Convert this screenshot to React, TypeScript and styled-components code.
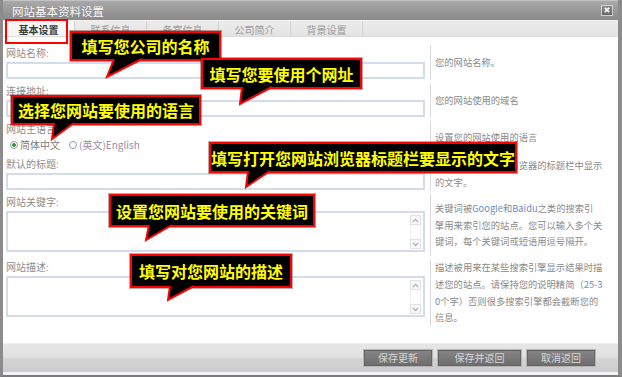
import React from "react";
import styled, { createGlobalStyle } from "styled-components";

const CJK = `"Noto Sans CJK SC", "Noto Sans", sans-serif`;

const GlobalStyle = createGlobalStyle`
  html, body { margin: 0; padding: 0; background: #fff; }
  body { font-family: ${CJK}; }
  * { box-sizing: border-box; }
`;

const Stage = styled.div`
  position: relative;
  width: 622px;
  height: 377px;
  overflow: hidden;
`;

const Frame = styled.div`
  width: 622px;
  height: 377px;
  border-left: 3px solid #8b8b8b;
  border-right: 4px solid #8b8b8b;
  border-bottom: 2px solid #7b7b7b;
  display: flex;
  flex-direction: column;
  background: #fff;
  font-family: ${CJK};
`;

const TitleBar = styled.div`
  height: 20px;
  flex: none;
  display: flex;
  align-items: center;
  justify-content: space-between;
  padding: 0 5px 0 9px;
  border-top: 1px solid #c2c2c2;
  background: linear-gradient(#a9a9a9 0%, #9c9c9c 40%, #8a8a8a 100%);
`;

const Title = styled.span`
  color: #fff;
  font-size: 11.5px;
  line-height: 14px;
  text-shadow: 0 0 1px rgba(0, 0, 0, 0.25);
`;

const CloseBtn = styled.div`
  width: 12px;
  height: 11px;
  margin-top: -1px;
  border: 1px solid #cfcfcf;
  background: linear-gradient(#8c8c8c, #676767);
  display: flex;
  align-items: center;
  justify-content: center;
`;

const TabStrip = styled.div`
  height: 17px;
  flex: none;
  display: flex;
  background: linear-gradient(#ececec, #e3e3e3);
  border-top: 1px solid #f2f2f2;
  border-bottom: 1px solid #dcdcdc;
`;

const Tab = styled.div<{ $active?: boolean }>`
  width: 72px;
  display: flex;
  justify-content: center;
  padding-top: 3px;
  font-size: 10px;
  line-height: 12px;
  color: ${(p) => (p.$active ? "#3a3a3a" : "#9a9a9a")};
  font-weight: ${(p) => (p.$active ? 700 : 400)};
  background: ${(p) => (p.$active ? "#f6f6f6" : "transparent")};
  border-right: 1px solid #d2d2d2;
`;

const Body = styled.div`
  flex: 1;
  padding: 7px 0 0 3px;
  overflow: hidden;
`;

const Row = styled.div`
  display: grid;
  grid-template-columns: 419px 1fr;
  column-gap: 5px;
`;

const Field = styled.div<{ $bottom?: number }>`
  padding: 2px 0 ${(p) => p.$bottom ?? 3}px;
`;

const Label = styled.div`
  height: 14px;
  line-height: 14px;
  margin-bottom: 2px;
  font-size: 10px;
  color: #8e8e8e;
  white-space: nowrap;
`;

const Colon = styled.span`
  color: #c493c4;
`;

const TextInput = styled.input`
  display: block;
  width: 100%;
  height: 17px;
  margin: 0;
  padding: 0 3px;
  border: 2px solid #d3dce8;
  font-size: 10px;
  font-family: ${CJK};
  background: #fff;
  outline: none;
`;

const TextBox = styled.div`
  display: flex;
  height: 41px;
  border: 2px solid #d3dce8;
  background: #fff;
`;

const Area = styled.textarea`
  flex: 1;
  border: none;
  resize: none;
  outline: none;
  overflow: hidden;
  padding: 2px 3px;
  font-size: 10px;
  font-family: ${CJK};
  background: transparent;
`;

const ScrollTrack = styled.div`
  width: 11px;
  margin: 2px 2px 1px 0;
  display: flex;
  flex-direction: column;
  justify-content: space-between;
  border-left: 1px solid #eef0f3;
  border-right: 1px solid #eef0f3;
`;

const ArrowBtn = styled.div`
  width: 11px;
  height: 10px;
  margin-left: -1px;
  border: 1px solid #dfe3e8;
  background: #f7f7f7;
  display: flex;
  align-items: center;
  justify-content: center;
`;

const RadioRow = styled.div`
  height: 14px;
  display: flex;
  align-items: center;
  padding-left: 4px;
  font-size: 10px;
  line-height: 14px;
`;

const RadioDot = styled.span<{ $checked?: boolean }>`
  width: 8px;
  height: 8px;
  border-radius: 50%;
  border: 1px solid #8f9ca8;
  margin-right: 2px;
  background: ${(p) =>
    p.$checked ? "radial-gradient(circle, #3c9c3c 0 1.6px, #fff 2.2px)" : "#fff"};
`;

const RadioText = styled.span<{ $tone?: "plain" | "alt" }>`
  color: ${(p) => (p.$tone === "alt" ? "#a08aa6" : "#7c7c7c")};
  margin-right: 9px;
  white-space: nowrap;
`;

const HelpCell = styled.div`
  margin: 1px 0 2px;
  border-left: 1px solid #dadada;
  padding-left: 4px;
  display: flex;
  align-items: center;
  font-size: 9.3px;
  line-height: 16.8px;
  color: #8a8a8a;
  white-space: nowrap;
`;

const Hi = styled.span`
  color: #6c8cc6;
`;

const Footer = styled.div`
  height: 29px;
  flex: none;
  display: flex;
  justify-content: flex-end;
  align-items: center;
  gap: 4px;
  padding-right: 22px;
  border-top: 1px solid #efefef;
  background: linear-gradient(#e6e6e6 0%, #e1e1e1 45%, #d3d3d3 55%, #cccccc 100%);
`;

const BottomStrip = styled.div`
  height: 3px;
  flex: none;
  background: #f2f2f6;
`;

const Button = styled.button<{ $w: number }>`
  width: ${(p) => p.$w}px;
  height: 18px;
  padding: 0;
  margin: 0;
  border: 1px solid #b4b4b4;
  box-shadow: inset 0 0 0 1px #666;
  background: linear-gradient(#868686, #6c6c6c);
  color: #d6d6d6;
  font-size: 10px;
  font-family: ${CJK};
  line-height: 14px;
`;

const TabMark = styled.div`
  position: absolute;
  left: 5px;
  top: 19px;
  width: 63px;
  height: 25px;
  border: 2px solid #ff0000;
  z-index: 2;
  pointer-events: none;
`;

const CalloutWrap = styled.div<{ $x: number; $y: number; $w: number; $h: number }>`
  position: absolute;
  left: ${(p) => p.$x}px;
  top: ${(p) => p.$y}px;
  width: ${(p) => p.$w}px;
  height: ${(p) => p.$h}px;
  z-index: 3;
`;

const Bubble = styled.div`
  width: 100%;
  height: 100%;
  background: #000;
  border: 2px solid #ff0000;
  box-shadow: 0 0 0 1px rgba(90, 0, 0, 0.35);
  color: #ffff00;
  font-family: ${CJK};
  font-weight: 700;
  font-size: 16px;
  line-height: 18px;
  display: flex;
  align-items: center;
  justify-content: center;
  white-space: nowrap;
`;

const TailSvg = styled.svg<{ $top: number }>`
  position: absolute;
  left: 0;
  top: ${(p) => p.$top}px;
  overflow: visible;
`;

type TailSpec = { l: number; r: number; tx: number; ty: number };
type CalloutSpec = { text: string; x: number; y: number; w: number; h: number; tail: TailSpec };

const callouts: CalloutSpec[] = [
  { text: "填写您公司的名称", x: 70, y: 31, w: 151, h: 30, tail: { l: 44, r: 72, tx: 37, ty: 16 } },
  { text: "填写您要使用个网址", x: 201, y: 58, w: 161, h: 31, tail: { l: 41, r: 71, tx: 39, ty: 15 } },
  { text: "选择您网站要使用的语言", x: 11, y: 95, w: 190, h: 30, tail: { l: 43, r: 63, tx: 41, ty: 14 } },
  { text: "填写打开您网站浏览器标题栏要显示的文字", x: 209, y: 142, w: 308, h: 31, tail: { l: 39, r: 61, tx: 37, ty: 14 } },
  { text: "设置您网站要使用的关键词", x: 109, y: 194, w: 206, h: 33, tail: { l: 40, r: 63, tx: 37, ty: 13 } },
  { text: "填写对您网站的描述", x: 130, y: 254, w: 162, h: 34, tail: { l: 40, r: 64, tx: 38, ty: 12 } },
];

function Callout({ c }: { c: CalloutSpec }) {
  const { l, r, tx, ty } = c.tail;
  const tipY = ty + 3;
  return (
    <CalloutWrap $x={c.x} $y={c.y} $w={c.w} $h={c.h}>
      <Bubble>{c.text}</Bubble>
      <TailSvg $top={c.h - 3} width={c.w} height={tipY + 2}>
        <polygon points={`${l},0 ${r},0 ${tx},${tipY}`} fill="#000" />
        <polyline
          points={`${l},1 ${tx},${tipY} ${r},1`}
          fill="none"
          stroke="#ff0000"
          strokeWidth={2}
          strokeLinejoin="miter"
        />
      </TailSvg>
    </CalloutWrap>
  );
}

function Chevron({ up }: { up?: boolean }) {
  return (
    <svg width="7" height="5" viewBox="0 0 7 5">
      <polyline
        points={up ? "1,4 3.5,1.3 6,4" : "1,1 3.5,3.7 6,1"}
        fill="none"
        stroke="#a9b0b8"
        strokeWidth="1.2"
      />
    </svg>
  );
}

function MemoBox() {
  return (
    <TextBox>
      <Area />
      <ScrollTrack>
        <ArrowBtn>
          <Chevron up />
        </ArrowBtn>
        <ArrowBtn>
          <Chevron />
        </ArrowBtn>
      </ScrollTrack>
    </TextBox>
  );
}

function FieldLabel({ text }: { text: string }) {
  return (
    <Label>
      {text}
      <Colon>:</Colon>
    </Label>
  );
}

const tabs = ["基本设置", "联系信息", "备案信息", "公司简介", "背景设置"];

export default function App() {
  return (
    <>
      <GlobalStyle />
      <Stage>
        <Frame>
          <TitleBar>
            <Title>网站基本资料设置</Title>
            <CloseBtn>
              <svg width="6" height="6" viewBox="0 0 6 6">
                <path d="M0.8 0.8 L5.2 5.2 M5.2 0.8 L0.8 5.2" stroke="#fff" strokeWidth="1.7" />
              </svg>
            </CloseBtn>
          </TitleBar>
          <TabStrip>
            {tabs.map((t, i) => (
              <Tab key={t} $active={i === 0}>
                {t}
              </Tab>
            ))}
          </TabStrip>
          <Body>
            <Row>
              <Field>
                <FieldLabel text="网站名称" />
                <TextInput />
              </Field>
              <HelpCell>您的网站名称。</HelpCell>
            </Row>
            <Row>
              <Field>
                <FieldLabel text="连接地址" />
                <TextInput />
              </Field>
              <HelpCell>您的网站使用的域名</HelpCell>
            </Row>
            <Row>
              <Field>
                <FieldLabel text="网站主语言" />
                <RadioRow>
                  <RadioDot $checked />
                  <RadioText>简体中文</RadioText>
                  <RadioDot />
                  <RadioText $tone="alt">(英文)English</RadioText>
                </RadioRow>
              </Field>
              <HelpCell>设置您的网站使用的语言</HelpCell>
            </Row>
            <Row>
              <Field>
                <FieldLabel text="默认的标题" />
                <TextInput />
              </Field>
              <HelpCell>
                <div>
                  设置显示在您网站浏览器的标题栏中显示
                  <br />
                  的文字。
                </div>
              </HelpCell>
            </Row>
            <Row>
              <Field $bottom={6}>
                <FieldLabel text="网站关键字" />
                <MemoBox />
              </Field>
              <HelpCell>
                <div>
                  关键词被<Hi>Google</Hi>和<Hi>Baidu</Hi>之类的搜索引
                  <br />
                  擎用来索引您的站点。您可以输入多个关
                  <br />
                  键词，每个关键词或短语用逗号隔开。
                </div>
              </HelpCell>
            </Row>
            <Row>
              <Field $bottom={6}>
                <FieldLabel text="网站描述" />
                <MemoBox />
              </Field>
              <HelpCell>
                <div>
                  描述被用来在某些搜索引擎显示结果时描
                  <br />
                  述您的站点。请保持您的说明精简（<Hi>25-3</Hi>
                  <br />
                  <Hi>0</Hi>个字）否则很多搜索引擎都会截断您的
                  <br />
                  信息。
                </div>
              </HelpCell>
            </Row>
          </Body>
          <Footer>
            <Button $w={70}>保存更新</Button>
            <Button $w={85}>保存并返回</Button>
            <Button $w={70}>取消返回</Button>
          </Footer>
          <BottomStrip />
        </Frame>
        <TabMark />
        {callouts.map((c) => (
          <Callout key={c.text} c={c} />
        ))}
      </Stage>
    </>
  );
}
